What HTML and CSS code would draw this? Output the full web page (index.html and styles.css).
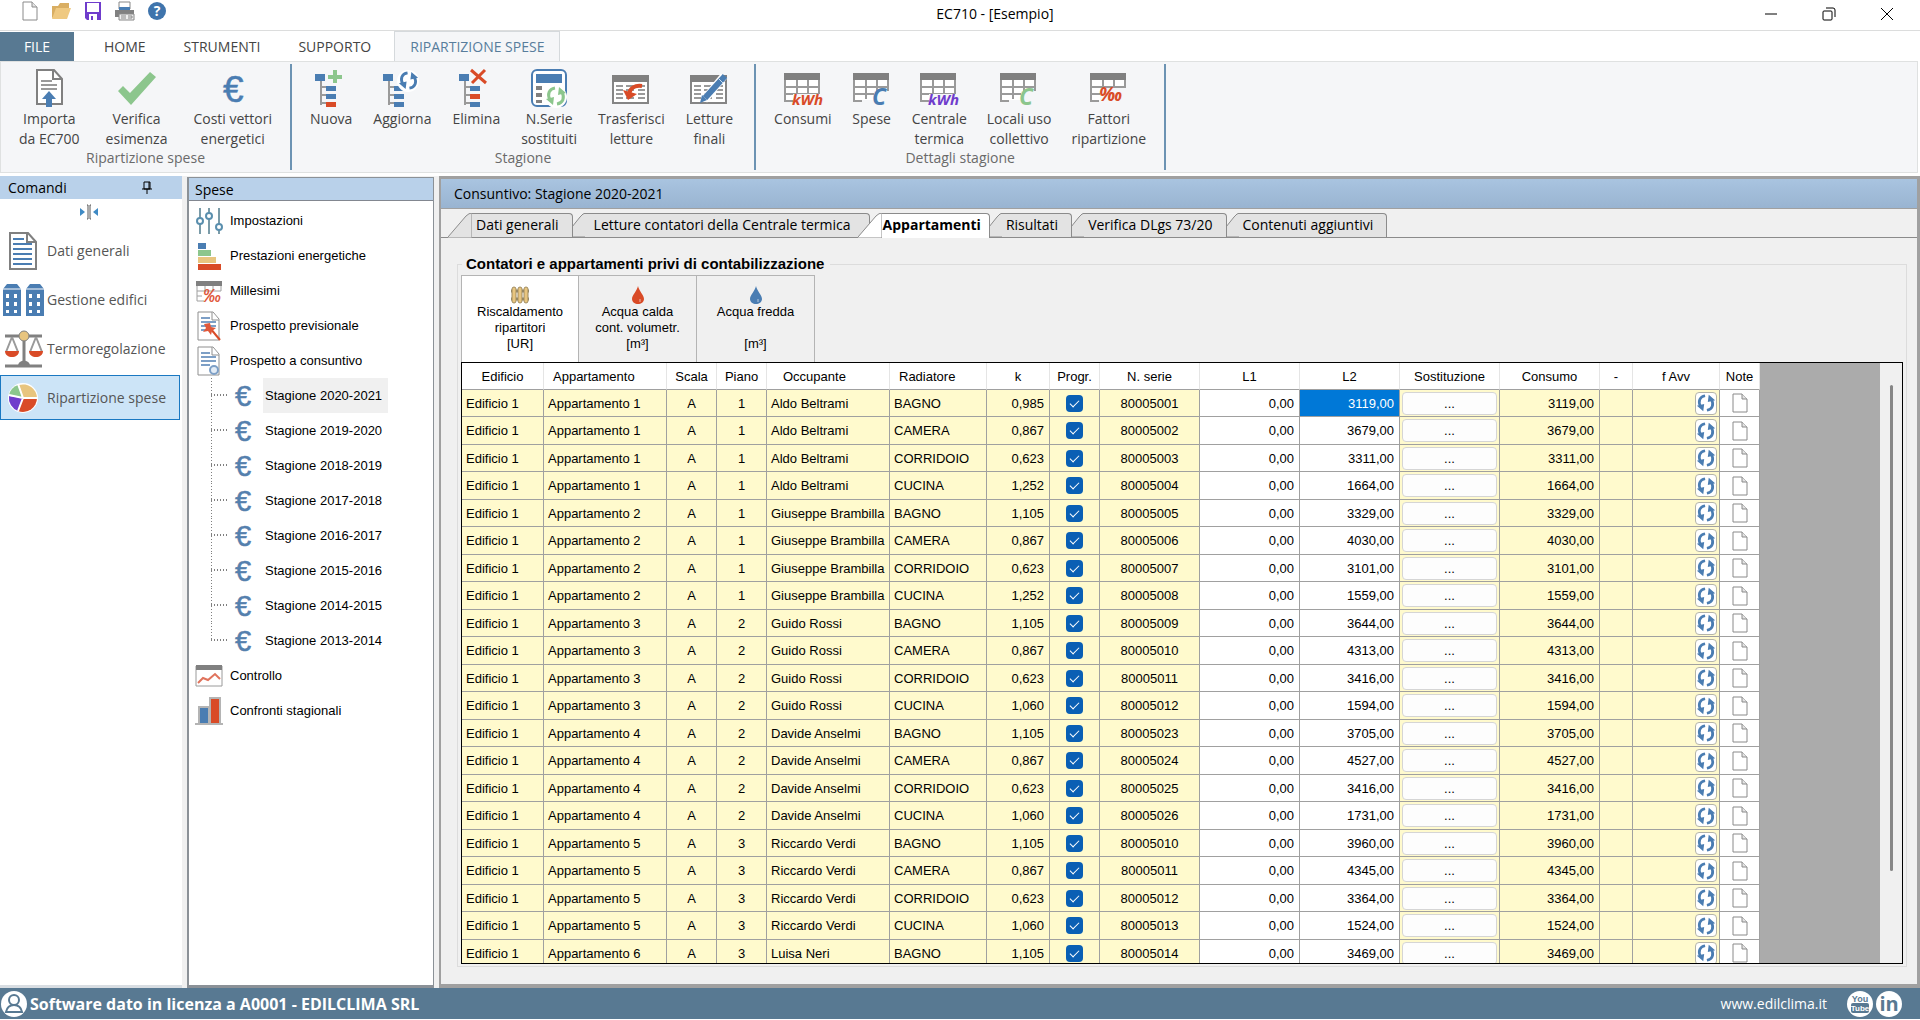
FILE: index.html
```html
<!DOCTYPE html>
<html lang="it">
<head>
  <meta charset="UTF-8" />
  <meta name="viewport" content="width=device-width, initial-scale=1.0" />
  <title>EC710 - [Esempio]</title>
  <link rel="stylesheet" href="styles.css">
</head>
<body>
  <svg class="symbols" aria-hidden="true">
    <symbol id="i-page" viewBox="0 0 16 20">
      <path d="M1 1h9l5 5v13H1z" fill="#fff" stroke="#8a8a8a"/>
      <path d="M10 1v5h5" fill="#e4e4e4" stroke="#8a8a8a"/>
    </symbol>
    <symbol id="i-euro" viewBox="0 0 20 28">
      <text x="1" y="24" font-size="29" font-family="Liberation Sans, Arial, sans-serif" fill="#5580ad" stroke="#5580ad" stroke-width="0.5">€</text>
    </symbol>
    <symbol id="i-tree" viewBox="0 0 40 40">
      <path d="M10 10v28M10 20h6M10 28h6M10 36h6" fill="none" stroke="#9a9a9a" stroke-width="2"/>
      <path d="M4 7h10v7H4zM15 19h10v5H15zM15 27h10v5H15z" fill="#4a7db2"/>
    </symbol>
    <symbol id="i-refresh" viewBox="0 0 22 22">
      <path d="M10 3C4 4 2 9 5 15M12 19c6-1 8-6 5-12" fill="none" stroke="#4a7db2" stroke-width="3"/>
      <path d="M1 14l8-2-1 8zM21 8l-8 2 1-8z" fill="#4a7db2"/>
    </symbol>
    <symbol id="i-sheet" viewBox="0 0 40 40">
      <path d="M2 7h34v26H2z" fill="#fff"/>
      <path d="M2 7v27h8M2 20h34M2 27h34M14 12v20M25 12v20M36 7v20" fill="none" stroke="#9a9a9a" stroke-width="2"/>
      <path d="M1 6h36v7H1z" fill="#808080"/>
    </symbol>
    <symbol id="i-list" viewBox="0 0 40 40">
      <path d="M2 9h35v27H2z" fill="#fff" stroke="#858585" stroke-width="2"/>
      <path d="M1 8h37v7H1z" fill="#808080"/>
      <path d="M5 19h7M5 23h7M5 27h7M5 31h7M15 19h8M15 23h8M15 27h8M15 31h8M27 19h7M27 23h7M27 27h7M27 31h7" stroke="#9a9a9a" stroke-width="2"/>
    </symbol>
    <symbol id="i-mill" viewBox="0 0 28 28">
      <path d="M2 6h24v8H2zM10 7v7M18 7v7M2 14v10h7M2 19h5" fill="#fff" stroke="#a0a0a0"/>
      <path d="M1 4h26v5H1z" fill="#808080"/>
      <text x="8" y="25" font-size="18" font-style="italic" font-weight="bold" font-family="Liberation Sans, Arial, sans-serif" fill="#e0583a">‰</text>
    </symbol>
    <symbol id="i-doc" viewBox="0 0 28 30">
      <path d="M3 1h15l6 7v21H3z" fill="#fff" stroke="#8f8f8f"/>
      <path d="M17 1v8h7" fill="#fff" stroke="#8f8f8f"/>
      <path d="M6 7h9M6 11h15M6 15h15M6 19h9" stroke="#7d9fc6" stroke-width="2"/>
    </symbol>
    <symbol id="i-drop" viewBox="0 0 14 18">
      <path d="M7 0C6 5 1 9 1 13c0 3 3 5 6 5s6-2 6-5C13 9 8 5 7 0z"/>
      <path d="M9 13v3" stroke="#ffffff99"/>
    </symbol>
  </svg>

  <header class="titlebar">
    <div class="quick">
      <button aria-label="Nuovo"><svg width="16" height="20"><use href="#i-page"/></svg></button>
      <button aria-label="Apri"><svg width="20" height="18" viewBox="0 0 20 18"><path d="M1 16V4h6l2-3h9v5" fill="#d9ae62"/><path d="M1 17L5 6h15l-4 11z" fill="#efc981"/></svg></button>
      <button aria-label="Salva"><svg width="18" height="20" viewBox="0 0 18 20"><path d="M1 1h16v18H3l-2-2z" fill="#6f3ccc"/><path d="M3 2h12v9H3zM5 13h8v6H5z" fill="#fff"/><path d="M7 15h2v4H7z" fill="#6f3ccc"/></svg></button>
      <button aria-label="Stampa"><svg width="20" height="20" viewBox="0 0 20 20"><path d="M4 1h11v7H4z" fill="#fff" stroke="#888"/><path d="M0 9h19v7H0z" fill="#808080"/><path d="M4 6h11v3H4z" fill="#4a7db2"/><path d="M4 13h15v6H4z" fill="#eee" stroke="#888"/><path d="M6 15h5M6 17h5M13 15h4v2h-4" stroke="#888" fill="none"/></svg></button>
      <button aria-label="Guida"><svg width="18" height="18" viewBox="0 0 18 18"><circle cx="9" cy="9" r="9" fill="#3f74ac"/><text x="9" y="14" text-anchor="middle" font-size="14" font-weight="bold" font-family="Open Sans, sans-serif" fill="#fff">?</text></svg></button>
    </div>
    <div class="title">EC710 - [Esempio]</div>
    <div class="window-buttons">
      <button aria-label="Riduci a icona"><svg width="14" height="14"><path d="M1 7h12" stroke="#000"/></svg></button>
      <button aria-label="Ripristina"><svg width="14" height="14" fill="none" stroke="#000"><rect x="1" y="4" width="9" height="9" rx="1"/><path d="M4 1h7q2 0 2 2v7"/></svg></button>
      <button aria-label="Chiudi"><svg width="14" height="14"><path d="M1 1l12 12M13 1L1 13" stroke="#000"/></svg></button>
    </div>
  </header>

  <nav class="menu">
    <button class="menu-file">FILE</button>
    <button>HOME</button>
    <button>STRUMENTI</button>
    <button>SUPPORTO</button>
    <button class="menu-active">RIPARTIZIONE SPESE</button>
  </nav>

  <section class="ribbon">
    <div class="group">
      <div class="group-buttons spaced">
        <button>
          <svg class="icon" viewBox="0 0 40 40"><path d="M8 3h17l8 9v25H8z" fill="#fff" stroke="#808080" stroke-width="2"/><path d="M24 3v9h9" fill="none" stroke="#808080" stroke-width="2"/><path d="M12 14h11M12 18h16M12 22h16" stroke="#9a9a9a" stroke-width="2"/><path d="M20 24l7 8h-4v8h-6v-8h-4z" fill="#4a7db2"/></svg>
          <span>Importa<br>da EC700</span>
        </button>
        <button>
          <svg class="icon" viewBox="0 0 40 40"><path d="M1 24l5-5 7 7L33 5l6 5-25 28z" fill="#8cc68d"/></svg>
          <span>Verifica<br>esimenza</span>
        </button>
        <button>
          <svg class="icon" viewBox="0 0 40 40"><text x="10" y="35" font-size="37" font-family="Liberation Sans, Arial, sans-serif" fill="#4a7db2" stroke="#4a7db2" stroke-width="0.5">€</text></svg>
          <span>Costi vettori<br>energetici</span>
        </button>
      </div>
      <div class="group-name">Ripartizione spese</div>
    </div>
    <div class="group">
      <div class="group-buttons seasons">
        <button>
          <svg class="icon" viewBox="0 0 40 40"><use href="#i-tree"/><path d="M15 35h10v5H15z" fill="#d94b27"/><path d="M24 3v13M17 10h14" stroke="#8cc68d" stroke-width="4"/></svg>
          <span>Nuova</span>
        </button>
        <button>
          <svg class="icon" viewBox="0 0 40 40"><use href="#i-tree" x="-3" width="40" height="40"/><path d="M12 35h10v5H12z" fill="#4a7db2"/><circle cx="26" cy="14" r="11" fill="#fff"/><use href="#i-refresh" x="16" y="3" width="21" height="21"/></svg>
          <span>Aggiorna</span>
        </button>
        <button>
          <svg class="icon" viewBox="0 0 40 40"><use href="#i-tree" x="-1" width="40" height="40"/><path d="M14 27h10v5H14z" fill="#d94b27"/><path d="M14 35h10v5H14z" fill="#4a7db2"/><path d="M15 3l15 13M29 3L16 16" stroke="#d94b27" stroke-width="3"/></svg>
          <span>Elimina</span>
        </button>
        <button>
          <svg class="icon" viewBox="0 0 40 40"><rect x="3" y="3" width="34" height="36" rx="5" fill="#fff" stroke="#4a7db2" stroke-width="2"/><path d="M7 7h26v9H7z" fill="#4a7db2"/><path d="M7 19h6v4H7zM7 26h6v4H7zM7 33h6v3H7z" fill="#808080"/><circle cx="27" cy="30" r="11" fill="#fff"/><path d="M26 21c-6 1-8 6-5 12M28 37c6-1 8-6 5-12" fill="none" stroke="#8cc68d" stroke-width="3"/><path d="M17 32l8-2-1 8zM37 26l-8 2 1-8z" fill="#8cc68d"/></svg>
          <span>N.Serie<br>sostituiti</span>
        </button>
        <button>
          <svg class="icon" viewBox="0 0 40 40"><use href="#i-list"/><path d="M31 19c-7-1-12 2-13 8" fill="none" stroke="#d94b27" stroke-width="4"/><path d="M12 23l5 10 9-6z" fill="#d94b27"/></svg>
          <span>Trasferisci<br>letture</span>
        </button>
        <button>
          <svg class="icon" viewBox="0 0 40 40"><use href="#i-list"/><path d="M35 9L15 33" stroke="#fff" stroke-width="8"/><path d="M36 9L16 31" stroke="#4a7db2" stroke-width="6"/><path d="M13 28l5 5-7 3z" fill="#4a7db2"/><path d="M30 12l4 4" stroke="#cfdff0"/></svg>
          <span>Letture<br>finali</span>
        </button>
      </div>
      <div class="group-name">Stagione</div>
    </div>
    <div class="group">
      <div class="group-buttons">
        <button>
          <svg class="icon" viewBox="0 0 40 40"><use href="#i-sheet"/><path d="M10 27h28v12H10z" fill="#f5f6f8"/><text class="mark" x="9" y="38" font-size="15" fill="#d94b27">kWh</text></svg>
          <span>Consumi</span>
        </button>
        <button>
          <svg class="icon" viewBox="0 0 40 40"><use href="#i-sheet"/><path d="M22 24h16v14H22z" fill="#f5f6f8"/><text class="mark" x="20" y="38" font-size="23" fill="#4a7db2">C</text></svg>
          <span>Spese</span>
        </button>
        <button>
          <svg class="icon" viewBox="0 0 40 40"><use href="#i-sheet"/><path d="M10 27h28v12H10z" fill="#f5f6f8"/><text class="mark" x="9" y="38" font-size="15" fill="#6f3ccc">kWh</text></svg>
          <span>Centrale<br>termica</span>
        </button>
        <button>
          <svg class="icon" viewBox="0 0 40 40"><use href="#i-sheet"/><path d="M22 24h16v14H22z" fill="#f5f6f8"/><text class="mark" x="20" y="38" font-size="23" fill="#8cc68d">C</text></svg>
          <span>Locali uso<br>collettivo</span>
        </button>
        <button>
          <svg class="icon" viewBox="0 0 40 40"><use href="#i-sheet"/><path d="M11 21h28v15H11z" fill="#f5f6f8"/><text class="mark" x="10" y="34" font-size="19" fill="#d94b27">‰</text></svg>
          <span>Fattori<br>ripartizione</span>
        </button>
      </div>
      <div class="group-name">Dettagli stagione</div>
    </div>
  </section>

  <div class="workspace">
    <aside class="commands">
      <div class="pane-title">
        <span>Comandi</span>
        <svg width="10" height="14" viewBox="0 0 10 14"><path d="M2 1h6v7H2zM0 8h10M5 8v5M7 1v7" fill="none" stroke="#000" stroke-width="1"/></svg>
      </div>
      <button class="collapse" aria-label="Riduci pannello"><svg width="20" height="16" viewBox="0 0 20 16"><path d="M1 4l5 4-5 4zM19 4l-5 4 5 4z" fill="#3f8ac4"/><path d="M8 1h1v14H8M12 1h-1v14h1" fill="none" stroke="#555"/></svg></button>
      <button class="command">
        <svg width="44" height="40" viewBox="0 0 44 40"><path d="M9 2h18l8 9v27H9z" fill="#fff" stroke="#808080" stroke-width="2"/><path d="M26 2v9h9" fill="none" stroke="#808080" stroke-width="2"/><path d="M12 8h11M12 13h19M12 18h19M12 23h19M12 28h19M12 33h19" stroke="#4a7db2" stroke-width="2"/></svg>
        Dati generali
      </button>
      <button class="command">
        <svg width="44" height="40" viewBox="0 0 44 40"><path d="M2 9l4-5h10l4 5v27H2zM25 9l4-5h10l4 5v27H25z" fill="#4a7db2"/><path d="M2 9h18M25 9h18" stroke="#fff"/><path d="M5 14h3v4H5zM13 14h3v4h-3zM5 22h3v4H5zM13 22h3v4h-3zM5 30h3v3H5zM13 30h3v3h-3zM28 14h3v4h-3zM36 14h3v4h-3zM28 22h3v4h-3zM36 22h3v4h-3zM28 30h3v3h-3zM36 30h3v3h-3z" fill="#fff"/></svg>
        Gestione edifici
      </button>
      <button class="command">
        <svg width="44" height="40" viewBox="0 0 44 40"><path d="M4 7h37M23 7v28M4 37h37" stroke="#808080" stroke-width="3"/><path d="M17 37c0-7 12-7 12 0z" fill="#808080"/><path d="M11 8L5 23M11 8l6 15M35 8l-6 15M35 8l6 15" stroke="#9a9a9a" stroke-width="2"/><path d="M4 22h14c0 8-14 8-14 0zM28 22h14c0 8-14 8-14 0z" fill="#d94b27"/><circle cx="23" cy="7" r="5" fill="#e8c57f" stroke="#808080"/></svg>
        Termoregolazione
      </button>
      <button class="command selected">
        <svg width="44" height="40" viewBox="0 0 44 40"><circle cx="22" cy="20" r="15" fill="#fff"/><path d="M22 20L18 7a14 14 0 0 1 18 13z" fill="#e8c57f"/><path d="M22 20h14a14 14 0 0 1-19 13z" fill="#d94b27"/><path d="M22 20l-5 13A14 14 0 0 1 8 18z" fill="#6f3ccc"/><path d="M22 20L8 17a14 14 0 0 1 9-10z" fill="#8cc68d"/><path d="M22 20L17 6M22 20h14M22 20l-5 13M22 20L8 17" stroke="#fff" stroke-width="2"/></svg>
        Ripartizione spese
      </button>
    </aside>

    <aside class="expenses">
      <div class="pane-title">Spese</div>
      <ul class="tree">
        <li><svg width="28" height="30" viewBox="0 0 28 30"><path d="M5 2v26M14 2v26M24 2v26" stroke="#7a9ba8" stroke-width="2"/><g fill="#fff" stroke="#5a8fae" stroke-width="2"><circle cx="5" cy="15" r="3"/><circle cx="14" cy="10" r="3"/><circle cx="24" cy="21" r="3"/></g></svg><a href="#">Impostazioni</a></li>
        <li><svg width="28" height="30" viewBox="0 0 28 30"><path d="M3 2h8v6H3z" fill="#4a7db2"/><path d="M3 9h13v6H3z" fill="#8cc68d"/><path d="M3 16h18v6H3z" fill="#e8c57f"/><path d="M3 23h23v6H3z" fill="#d94b27"/></svg><a href="#">Prestazioni energetiche</a></li>
        <li><svg width="28" height="28"><use href="#i-mill"/></svg><a href="#">Millesimi</a></li>
        <li><svg width="28" height="30"><use href="#i-doc"/><path d="M15 17l10 12" stroke="#d94b27" stroke-width="2"/><path d="M15 12l1 4 5 1-4 3-1 4-3-4-5 1 3-4-2-4z" fill="#e0583a"/></svg><a href="#">Prospetto previsionale</a></li>
        <li><svg width="28" height="30"><use href="#i-doc"/><circle cx="19" cy="24" r="4" fill="#e3ecf6" stroke="#7d9fc6" stroke-width="2"/></svg><a href="#">Prospetto a consuntivo</a></li>
        <li class="season"><svg class="branch"><path d="M0 0v35M0 17h20"/></svg><svg width="20" height="28"><use href="#i-euro"/></svg><a href="#" class="current">Stagione 2020-2021</a></li>
        <li class="season"><svg class="branch"><path d="M0 0v35M0 17h20"/></svg><svg width="20" height="28"><use href="#i-euro"/></svg><a href="#">Stagione 2019-2020</a></li>
        <li class="season"><svg class="branch"><path d="M0 0v35M0 17h20"/></svg><svg width="20" height="28"><use href="#i-euro"/></svg><a href="#">Stagione 2018-2019</a></li>
        <li class="season"><svg class="branch"><path d="M0 0v35M0 17h20"/></svg><svg width="20" height="28"><use href="#i-euro"/></svg><a href="#">Stagione 2017-2018</a></li>
        <li class="season"><svg class="branch"><path d="M0 0v35M0 17h20"/></svg><svg width="20" height="28"><use href="#i-euro"/></svg><a href="#">Stagione 2016-2017</a></li>
        <li class="season"><svg class="branch"><path d="M0 0v35M0 17h20"/></svg><svg width="20" height="28"><use href="#i-euro"/></svg><a href="#">Stagione 2015-2016</a></li>
        <li class="season"><svg class="branch"><path d="M0 0v35M0 17h20"/></svg><svg width="20" height="28"><use href="#i-euro"/></svg><a href="#">Stagione 2014-2015</a></li>
        <li class="season"><svg class="branch"><path d="M0 0v17M0 17h20"/></svg><svg width="20" height="28"><use href="#i-euro"/></svg><a href="#">Stagione 2013-2014</a></li>
        <li><svg width="28" height="24" viewBox="0 0 28 24"><path d="M1 2h26v20H1z" fill="#fff" stroke="#9a9a9a"/><path d="M1 1h26v5H1z" fill="#808080"/><path d="M3 19l5-5 5 2 7-6 5 5" fill="none" stroke="#e0735c" stroke-width="2"/></svg><a href="#">Controllo</a></li>
        <li><svg width="28" height="28" viewBox="0 0 28 28"><path d="M0 26h28v2H0zM3 9h12v17H3zM14 0h12v26H14z" fill="#b4b4b4"/><path d="M5 11h8v15H5z" fill="#4a7db2"/><path d="M16 2h8v24h-8z" fill="#d94b27"/></svg><a href="#">Confronti stagionali</a></li>
      </ul>
    </aside>

    <main class="document">
      <h1>Consuntivo: Stagione 2020-2021</h1>
      <div class="tabs" role="tablist">
        <button class="tab first" role="tab"><svg class="slope"><path d="M0 24L18 3q3-3 6-3v25H0"/></svg><span>Dati generali</span></button>
        <button class="tab wide" role="tab"><svg class="slope"><path d="M-1 14L7 4q3-4 6-4v24H-1"/></svg><span>Letture contatori della Centrale termica</span></button>
        <button class="tab active" role="tab" aria-selected="true"><svg class="slope"><path d="M0 24L18 3q3-3 6-3v25H0"/></svg><span>Appartamenti</span></button>
        <button class="tab" role="tab"><svg class="slope"><path d="M-1 14L7 4q3-4 6-4v24H-1"/></svg><span>Risultati</span></button>
        <button class="tab" role="tab"><svg class="slope"><path d="M-1 14L7 4q3-4 6-4v24H-1"/></svg><span>Verifica DLgs 73/20</span></button>
        <button class="tab" role="tab"><svg class="slope"><path d="M-1 14L7 4q3-4 6-4v24H-1"/></svg><span>Contenuti aggiuntivi</span></button>
      </div>
      <div class="page">
        <fieldset>
          <legend>Contatori e appartamenti privi di contabilizzazione</legend>
          <div class="meters">
            <button class="meter active">
              <svg width="18" height="18" viewBox="0 0 18 18"><path d="M0 5h18M0 13h18" stroke="#8f8468" stroke-width="3"/><g fill="#e8c57f" stroke="#a08c60"><rect x="1" y="1" width="4" height="16" rx="2"/><rect x="7" y="1" width="4" height="16" rx="2"/><rect x="13" y="1" width="4" height="16" rx="2"/></g></svg>
              <span>Riscaldamento<br>ripartitori<br>[UR]</span>
            </button>
            <button class="meter">
              <svg class="hot" width="14" height="18"><use href="#i-drop"/></svg>
              <span>Acqua calda<br>cont. volumetr.<br>[m³]</span>
            </button>
            <button class="meter">
              <svg class="cold" width="14" height="18"><use href="#i-drop"/></svg>
              <span>Acqua fredda<br><br>[m³]</span>
            </button>
          </div>
          <div class="grid">
            <table>
              <colgroup>
                <col class="w82"><col class="w123"><col class="w50"><col class="w50"><col class="w123"><col class="w97"><col class="w63"><col class="w50"><col class="w100"><col class="w100"><col class="w100"><col class="w100"><col class="w100"><col class="w33"><col class="w87"><col class="w40">
              </colgroup>
              <thead>
                <tr><th>Edificio</th><th class="left">Appartamento</th><th>Scala</th><th>Piano</th><th class="left">Occupante</th><th class="left">Radiatore</th><th>k</th><th>Progr.</th><th>N. serie</th><th>L1</th><th>L2</th><th>Sostituzione</th><th>Consumo</th><th>-</th><th>f Avv</th><th>Note</th></tr>
              </thead>
              <tbody id="rows"></tbody>
            </table>
            <div class="scrollbar"><div class="thumb"></div></div>
          </div>
        </fieldset>
      </div>
    </main>
  </div>

  <footer>
    <svg width="26" height="26" viewBox="0 0 26 26"><circle cx="13" cy="13" r="13" fill="#fff"/><circle cx="13" cy="9" r="5" fill="#fff" stroke="#587992" stroke-width="2"/><path d="M5 21c1-5 4-7 8-7s7 2 8 7z" fill="#fff" stroke="#587992" stroke-width="2"/></svg>
    <strong>Software dato in licenza a A0001 - EDILCLIMA SRL</strong>
    <a class="site" href="#">www.edilclima.it</a>
    <a href="#" aria-label="YouTube"><svg width="26" height="26" viewBox="0 0 26 26"><circle cx="13" cy="13" r="13" fill="#fff"/><rect x="4" y="12" width="18" height="10" rx="2" fill="#587992"/><g font-family="Liberation Sans, Arial, sans-serif" font-weight="bold" text-anchor="middle"><text x="13" y="11" font-size="9" fill="#587992">You</text><text x="13" y="20" font-size="8" fill="#fff">Tube</text></g></svg></a>
    <a href="#" aria-label="LinkedIn"><svg width="26" height="26" viewBox="0 0 26 26"><circle cx="13" cy="13" r="13" fill="#fff"/><text x="13" y="20" text-anchor="middle" font-size="20" font-weight="bold" font-family="Open Sans, sans-serif" fill="#587992">in</text></svg></a>
  </footer>

  <script src="script.js"></script>
</body>
</html>
```

FILE: styles.css
```css
* {
  box-sizing: border-box;
}
body {
  margin: 0;
  height: 100vh;
  display: flex;
  flex-direction: column;
  overflow: hidden;
  background-color: #fff;
  color: #000;
  font-family: "Open Sans", "Segoe UI", sans-serif;
  font-size: 14px;
}
button {
  padding: 0;
  border: 0;
  background: none;
  color: inherit;
  font: inherit;
}
a {
  color: inherit;
  text-decoration: none;
}
svg {
  flex: none;
}
.symbols {
  display: none;
}

/* title bar */
.titlebar {
  flex: none;
  display: flex;
  height: 31px;
  border-bottom: 1px solid #dcdddd;
}
.quick {
  display: flex;
  align-items: center;
  gap: 13px;
  width: 248px;
  padding: 0 0 8px 22px;
}
.quick svg {
  display: block;
}
.title {
  flex: 1;
  line-height: 27px;
  text-align: center;
}
.window-buttons {
  display: flex;
  padding-right: 4px;
}
.window-buttons button {
  width: 58px;
  height: 28px;
}
.window-buttons svg {
  display: block;
  margin: auto;
}

/* menu */
.menu {
  flex: none;
  display: flex;
  gap: 8px;
  height: 30px;
}
.menu button {
  padding: 0 15px;
  color: #444;
}
.menu .menu-file {
  width: 74px;
  margin: 1px 7px 0 0;
  background-color: #587992;
  color: #fff;
}
.menu .menu-active {
  border: 1px solid #d5d9dc;
  border-bottom: 0;
  background-color: #f5f6f8;
  color: #587d9c;
}

/* ribbon */
.ribbon {
  flex: none;
  display: flex;
  height: 112px;
  margin-right: 2px;
  padding-top: 2px;
  border: 1px solid #dfe1e1;
  background-color: #f5f6f8;
}
.group {
  display: flex;
  flex-direction: column;
  height: 106px;
  padding: 3px 8px 0;
  border-right: 2px solid #6c93b3;
}
.group-buttons {
  display: flex;
  height: 82px;
}
.group-buttons.spaced {
  gap: 6px;
}
.group-buttons.seasons {
  gap: 1px;
  padding-right: 3px;
}
.group-buttons button {
  display: flex;
  flex-direction: column;
  align-items: center;
  gap: 2px;
  padding: 0 10px;
  color: #444;
  line-height: 20px;
  white-space: nowrap;
}
.icon {
  width: 40px;
  height: 40px;
  overflow: visible;
}
.group-name {
  color: #6a6a6a;
  line-height: 18px;
  text-align: center;
}
.mark {
  font-family: "Open Sans", sans-serif;
  font-style: italic;
  font-weight: bold;
}

/* side panes */
.workspace {
  flex: 1;
  display: flex;
  gap: 5px;
  min-height: 0;
  margin-top: 3px;
  background-color: #f0f0f0;
}
.pane-title {
  display: flex;
  align-items: center;
  justify-content: space-between;
  height: 23px;
  background-color: #b9d1ea;
}
.commands {
  width: 182px;
  background-color: #fff;
  border-bottom: 3px solid #d8dde2;
}
.commands .pane-title {
  padding: 0 30px 0 8px;
}
.collapse {
  display: block;
  height: 20px;
  margin: 5px 0 4px 79px;
}
.command {
  display: flex;
  align-items: center;
  gap: 2px;
  width: 180px;
  height: 45px;
  margin-bottom: 4px;
  border: 1px solid transparent;
  color: #555;
}
.command.selected {
  border-color: #1a78c2;
  background-color: #cce4f7;
}
.expenses {
  width: 247px;
  margin-top: 1px;
  border: solid #8b9197;
  border-width: 1px 1px 3px 2px;
  background-color: #fff;
  font-family: "Liberation Sans", Arial, sans-serif;
  font-size: 13px;
}
.expenses .pane-title {
  padding-left: 6px;
  border-bottom: 1px solid #828790;
  font-family: "Open Sans", "Segoe UI", sans-serif;
  font-size: 14px;
}
.tree {
  margin: 0;
  padding: 2px 0 0 6px;
  list-style: none;
}
.tree li {
  display: flex;
  align-items: center;
  gap: 5px;
  height: 35px;
}
.tree a {
  padding: 0 2px;
  line-height: 35px;
}
.tree .season {
  padding-left: 16px;
}
.tree .season a {
  margin-left: 4px;
}
.tree .current {
  padding-right: 6px;
  background-color: #f0f0f0;
}
.branch {
  width: 18px;
  height: 35px;
  fill: none;
  stroke: #808080;
  stroke-width: 2;
  stroke-dasharray: 1 2;
}

/* document */
.document {
  flex: 1;
  display: flex;
  flex-direction: column;
  min-width: 0;
  border: solid #a0a0a0;
  border-width: 3px 3px 4px 2px;
}
h1 {
  flex: none;
  height: 30px;
  margin: 0;
  padding-left: 13px;
  border-bottom: 1px solid #a0a0a0;
  background: linear-gradient(#a9c4e0, #99b4d1);
  font-size: 14px;
  font-weight: normal;
  line-height: 30px;
}
.tabs {
  flex: none;
  display: flex;
  height: 29px;
  padding: 4px 0 0 7px;
  border-bottom: 1px solid #8b8b8b;
}
.tab {
  display: flex;
  height: 25px;
}
.slope {
  width: 12px;
  height: 25px;
  overflow: hidden;
  fill: #e3e3e3;
  stroke: #8b8b8b;
}
.tab span {
  height: 24px;
  padding: 0 13px 0 4px;
  border: solid #8b8b8b;
  border-width: 1px 1px 0 0;
  border-radius: 0 4px 0 0;
  background-color: #e3e3e3;
  line-height: 21px;
}
.tab.wide span {
  padding: 0 18px 0 9px;
}
.tab.first .slope,
.tab.active .slope {
  width: 24px;
}
.tab.active {
  margin-left: -12px;
  font-weight: bold;
}
.tab.active .slope {
  fill: #fff;
}
.tab.active span {
  height: 25px;
  padding: 0 8px 0 1px;
  background-color: #fff;
}
.page {
  flex: 1;
  display: flex;
  min-height: 0;
  padding: 17px 10px 17px 16px;
  background-color: #f0f0f0;
}
fieldset {
  flex: 1;
  display: flex;
  flex-direction: column;
  min-width: 0;
  margin: 0;
  padding: 2px 3px;
  border: 1px solid #dcdcdc;
  font-family: "Liberation Sans", Arial, sans-serif;
  font-size: 13px;
}
legend {
  margin-left: 1px;
  padding: 0 6px 0 4px;
  font-size: 15px;
  font-weight: bold;
  line-height: 18px;
}
.meters {
  display: flex;
  height: 87px;
}
.meter {
  display: flex;
  flex-direction: column;
  align-items: center;
  width: 118px;
  padding-top: 10px;
  border: solid #b4b4b4;
  border-width: 1px 1px 0 0;
  line-height: 16px;
}
.meter:first-child {
  border-left-width: 1px;
}
.meter.active {
  background-color: #fff;
}
.hot {
  fill: #d94b27;
}
.cold {
  fill: #4a7db2;
}

/* readings grid */
.grid {
  flex: 1;
  display: flex;
  justify-content: space-between;
  align-items: flex-start;
  min-height: 0;
  overflow: hidden;
  border: 1px solid #000;
  background-color: #ababab;
}
table {
  flex: none;
  table-layout: fixed;
  width: 1298px;
  border-collapse: separate;
  border-spacing: 0;
}
.w33 { width: 33px; }
.w40 { width: 40px; }
.w50 { width: 50px; }
.w63 { width: 63px; }
.w82 { width: 82px; }
.w87 { width: 87px; }
.w97 { width: 97px; }
.w100 { width: 100px; }
.w123 { width: 123px; }
th {
  height: 27px;
  padding: 1px 0 0;
  border-right: 1px solid #e5e5e5;
  border-bottom: 1px solid #a0a0a0;
  background-color: #fff;
  font-weight: normal;
}
th.left {
  padding-left: 9px;
  text-align: left;
}
th.left:nth-child(5) {
  padding-left: 16px;
}
td {
  height: 27px;
  padding: 0 4px;
  border: solid #a0a0a0;
  border-width: 0 1px 1px 0;
  background-color: #fffacd;
  white-space: nowrap;
}
tr:nth-child(even) td {
  height: 28px;
}
td.center {
  text-align: center;
}
td.number {
  padding-right: 5px;
  text-align: right;
}
td.edit {
  background-color: #fff;
}
td.selected {
  background-color: #0078d7;
  color: #fff;
}
td.tools {
  padding: 0 2px;
}
td svg,
td input,
td button {
  display: block;
  margin: 0 auto;
}
td button {
  width: 100%;
  height: 23px;
  border: 1px solid #d5d5d5;
  border-radius: 4px;
  background-color: #fdfdfd;
}
td .update {
  width: 22px;
  margin-right: 0;
  border-color: #b4b4a8;
  background-color: #fff;
}
td input {
  width: 17px;
  height: 17px;
  appearance: none;
  border-radius: 4px;
  background-color: #0a5fb4;
}
td input:checked::after {
  content: "";
  display: block;
  width: 8px;
  height: 4px;
  margin: 5px 0 0 4px;
  border: solid #fff;
  border-width: 0 0 1px 1px;
  transform: rotate(-45deg);
}
.scrollbar {
  align-self: stretch;
  width: 22px;
  padding-top: 22px;
  background-color: #f0f0f0;
}
.thumb {
  width: 3px;
  height: 84%;
  margin: 0 auto;
  border-radius: 2px;
  background-color: #868686;
}

/* status bar */
footer {
  flex: none;
  display: flex;
  align-items: center;
  gap: 3px;
  height: 31px;
  margin-bottom: 1px;
  padding: 0 18px 0 1px;
  background-color: #587992;
  color: #fff;
}
footer strong {
  font-size: 16px;
}
footer svg {
  display: block;
}
.site {
  margin: 0 17px 0 auto;
}
```

FILE: script.js
```js
const people = [
  ['Appartamento 1', '1', 'Aldo Beltrami'],
  ['Appartamento 2', '1', 'Giuseppe Brambilla'],
  ['Appartamento 3', '2', 'Guido Rossi'],
  ['Appartamento 4', '2', 'Davide Anselmi'],
  ['Appartamento 5', '3', 'Riccardo Verdi'],
  ['Appartamento 6', '3', 'Luisa Neri']
];
const rooms = ['BAGNO', 'CAMERA', 'CORRIDOIO', 'CUCINA'];

// k, numero di serie, lettura
const readings = [
  ['0,985', '80005001', '3119,00'],
  ['0,867', '80005002', '3679,00'],
  ['0,623', '80005003', '3311,00'],
  ['1,252', '80005004', '1664,00'],
  ['1,105', '80005005', '3329,00'],
  ['0,867', '80005006', '4030,00'],
  ['0,623', '80005007', '3101,00'],
  ['1,252', '80005008', '1559,00'],
  ['1,105', '80005009', '3644,00'],
  ['0,867', '80005010', '4313,00'],
  ['0,623', '80005011', '3416,00'],
  ['1,060', '80005012', '1594,00'],
  ['1,105', '80005023', '3705,00'],
  ['0,867', '80005024', '4527,00'],
  ['0,623', '80005025', '3416,00'],
  ['1,060', '80005026', '1731,00'],
  ['1,105', '80005010', '3960,00'],
  ['0,867', '80005011', '4345,00'],
  ['0,623', '80005012', '3364,00'],
  ['1,060', '80005013', '1524,00'],
  ['1,105', '80005014', '3469,00']
];

document.getElementById('rows').innerHTML = readings.map(([k, serial, value], i) => {
  const [flat, floor, name] = people[Math.floor(i / 4)];
  return `<tr>
    <td>Edificio 1</td>
    <td>${flat}</td>
    <td class="center">A</td>
    <td class="center">${floor}</td>
    <td>${name}</td>
    <td>${rooms[i % 4]}</td>
    <td class="number">${k}</td>
    <td><input type="checkbox" aria-label="Progr." checked></td>
    <td class="center">${serial}</td>
    <td class="number edit">0,00</td>
    <td class="number edit${i === 0 ? ' selected' : ''}">${value}</td>
    <td class="tools"><button>...</button></td>
    <td class="number">${value}</td>
    <td></td>
    <td class="tools"><button class="update" aria-label="Aggiorna"><svg width="20" height="20"><use href="#i-refresh"/></svg></button></td>
    <td class="edit"><svg width="16" height="20"><use href="#i-page"/></svg></td>
  </tr>`;
}).join('');
```
